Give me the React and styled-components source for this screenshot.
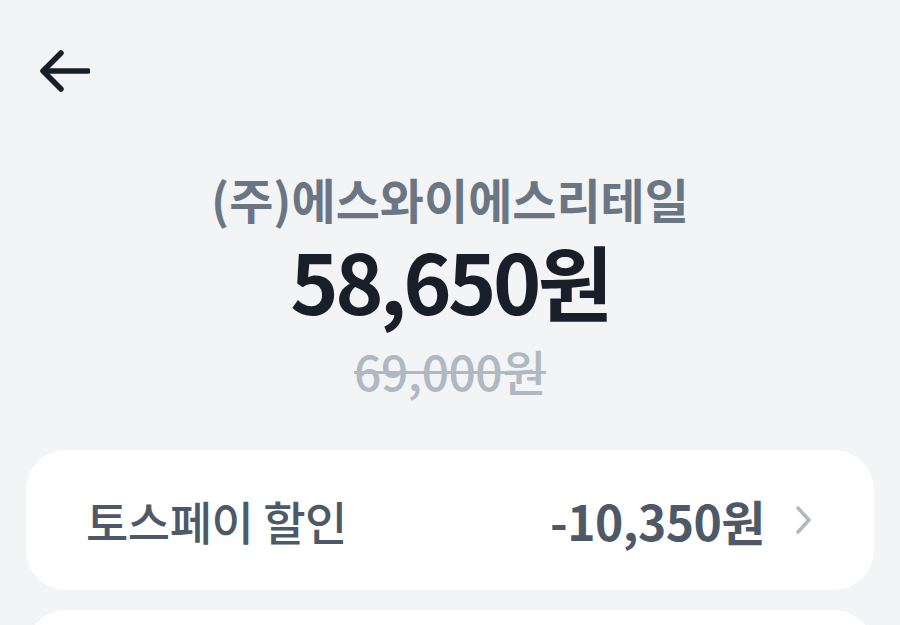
import React from "react";
import styled, { createGlobalStyle } from "styled-components";

const GlobalStyle = createGlobalStyle`
    html, body {
        margin: 0;
        padding: 0;
        background-color: #f3f4f6;
        font-family: "Noto Sans CJK KR", "Noto Sans", sans-serif;
    }
`;

const Page = styled.div`
    width: 900px;
    height: 625px;
    overflow: hidden;
    display: flex;
    flex-direction: column;
    background-color: #f3f4f6;

    & > * {
        flex-shrink: 0;
    }
`;

const TopBar = styled.div`
    height: 140px;
    padding-left: 38px;
    padding-top: 46px;
    box-sizing: border-box;
`;

const BackButton = styled.button`
    border: none;
    background: none;
    padding: 0;
    width: 56px;
    height: 50px;
    display: flex;
    align-items: center;
    cursor: pointer;
`;

const Summary = styled.div`
    display: flex;
    flex-direction: column;
    align-items: center;
`;

const Merchant = styled.div`
    font-size: 48px;
    font-weight: 600;
    color: #6b7684;
    line-height: 64px;
    margin-top: 26px;
`;

const Price = styled.div`
    font-size: 82px;
    font-weight: 700;
    color: #191f28;
    line-height: 100px;
    letter-spacing: -3.5px;
`;

const OldPrice = styled.div`
    font-size: 48px;
    font-weight: 500;
    color: #b0b8c1;
    line-height: 56px;
    text-decoration: line-through;
    text-decoration-thickness: 3px;
    margin-top: 12px;
    letter-spacing: -0.5px;
`;

const CardList = styled.div`
    display: flex;
    flex-direction: column;
    gap: 20px;
    padding: 0 26px;
    margin-top: 52px;
`;

const Card = styled.div`
    background-color: #ffffff;
    border-radius: 40px;
    height: 140px;
    display: flex;
    align-items: center;
    justify-content: space-between;
    padding: 0 61px 0 60px;
    box-sizing: border-box;
`;

const Label = styled.span`
    font-size: 46px;
    font-weight: 500;
    color: #4e5968;
    letter-spacing: -0.5px;
`;

const Right = styled.div`
    display: flex;
    align-items: center;
    gap: 30px;
`;

const Amount = styled.span`
    font-size: 48px;
    font-weight: 700;
    color: #4e5968;
    letter-spacing: -0.5px;
`;

const ArrowLeft = () => (
    <svg width="52" height="44" viewBox="0 0 52 44" fill="none">
        <path d="M50 22H6" stroke="#191f28" strokeWidth="5.5" strokeLinecap="round" />
        <path d="M23 4L5 22L23 40" stroke="#191f28" strokeWidth="5.5" strokeLinecap="round" strokeLinejoin="round" />
    </svg>
);

const Chevron = () => (
    <svg width="18" height="30" viewBox="0 0 18 30" fill="none">
        <path d="M3 3L14 15L3 27" stroke="#b0b8c1" strokeWidth="3.5" strokeLinecap="round" strokeLinejoin="round" />
    </svg>
);

const App = () => {
    return (
        <Page>
            <GlobalStyle />
            <TopBar>
                <BackButton aria-label="뒤로">
                    <ArrowLeft />
                </BackButton>
            </TopBar>
            <Summary>
                <Merchant>(주)에스와이에스리테일</Merchant>
                <Price>58,650원</Price>
                <OldPrice>69,000원</OldPrice>
            </Summary>
            <CardList>
                <Card>
                    <Label>토스페이 할인</Label>
                    <Right>
                        <Amount>-10,350원</Amount>
                        <Chevron />
                    </Right>
                </Card>
                <Card />
            </CardList>
        </Page>
    );
};

export default App;
